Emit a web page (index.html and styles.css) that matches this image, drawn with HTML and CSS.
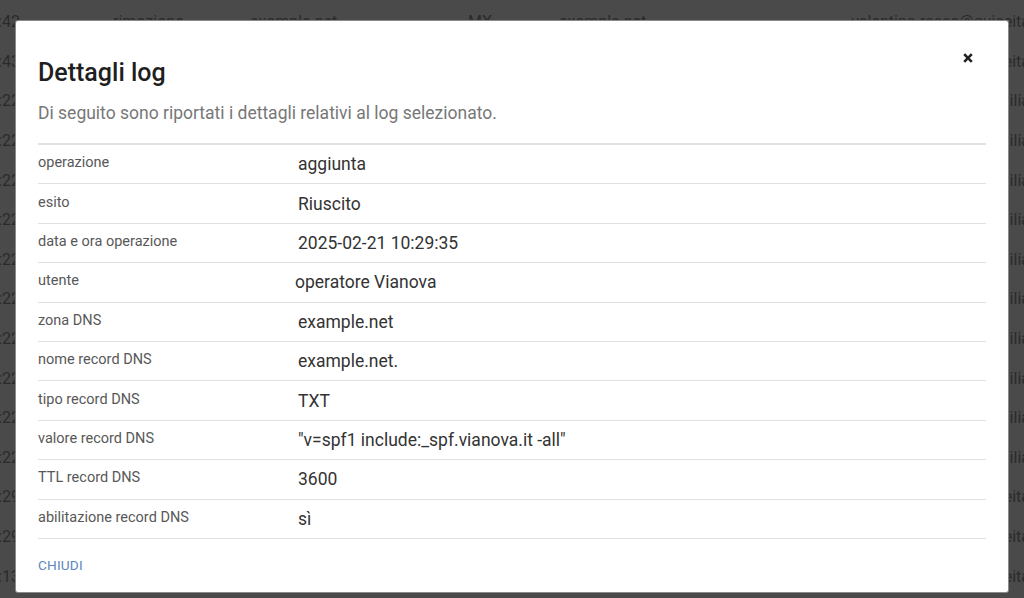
FILE: index.html
```html
<!DOCTYPE html>
<html lang="it">
<head>
<meta charset="utf-8">
<title>Dettagli log</title>
<link rel="stylesheet" href="styles.css">
</head>
<body>
<div class="bg">
  <div class="bg-row"><span class="c-time">2025-02-21 10:43:42</span><span>rimozione</span><span>example.net</span><span>MX</span><span>example.net</span><span class="c-user">valentina.rossa@quiseita</span></div>
  <div class="bg-row"><span class="c-time">2025-02-21 10:43</span><span>aggiunta</span><span>example.net</span><span>MX</span><span>example.net</span><span class="c-user">valentina.rossa@quiseita</span></div>
  <div class="bg-row"><span class="c-time">2025-02-21 10:22</span><span>aggiunta</span><span>example.net</span><span>TXT</span><span>example.net</span><span class="c-user">operatore@vianovafamilia</span></div>
  <div class="bg-row"><span class="c-time">2025-02-21 10:22</span><span>aggiunta</span><span>example.net</span><span>TXT</span><span>example.net</span><span class="c-user">operatore@vianovafamilia</span></div>
  <div class="bg-row"><span class="c-time">2025-02-21 10:22</span><span>aggiunta</span><span>example.net</span><span>TXT</span><span>example.net</span><span class="c-user">operatore@vianovafamilia</span></div>
  <div class="bg-row"><span class="c-time">2025-02-21 10:22</span><span>aggiunta</span><span>example.net</span><span>TXT</span><span>example.net</span><span class="c-user">operatore@vianovafamilia</span></div>
  <div class="bg-row"><span class="c-time">2025-02-21 10:22</span><span>aggiunta</span><span>example.net</span><span>TXT</span><span>example.net</span><span class="c-user">operatore@vianovafamilia</span></div>
  <div class="bg-row"><span class="c-time">2025-02-21 10:22</span><span>aggiunta</span><span>example.net</span><span>TXT</span><span>example.net</span><span class="c-user">operatore@vianovafamilia</span></div>
  <div class="bg-row"><span class="c-time">2025-02-21 10:22</span><span>aggiunta</span><span>example.net</span><span>TXT</span><span>example.net</span><span class="c-user">operatore@vianovafamilia</span></div>
  <div class="bg-row"><span class="c-time">2025-02-21 10:22</span><span>aggiunta</span><span>example.net</span><span>TXT</span><span>example.net</span><span class="c-user">operatore@vianovafamilia</span></div>
  <div class="bg-row"><span class="c-time">2025-02-21 10:22</span><span>aggiunta</span><span>example.net</span><span>TXT</span><span>example.net</span><span class="c-user">operatore@vianovafamilia</span></div>
  <div class="bg-row"><span class="c-time">2025-02-21 10:22</span><span>aggiunta</span><span>example.net</span><span>TXT</span><span>example.net</span><span class="c-user">operatore@vianovafamilia</span></div>
  <div class="bg-row"><span class="c-time">2025-02-21 10:29</span><span>aggiunta</span><span>example.net</span><span>TXT</span><span>example.net</span><span class="c-user">valentina.rossa@quiseita</span></div>
  <div class="bg-row"><span class="c-time">2025-02-21 10:29</span><span>aggiunta</span><span>example.net</span><span>TXT</span><span>example.net</span><span class="c-user">valentina.rossa@quiseita</span></div>
  <div class="bg-row"><span class="c-time">2025-02-21 10:13</span><span>aggiunta</span><span>example.net</span><span>TXT</span><span>example.net</span><span class="c-user">valentina.rossa@quiseita</span></div>
</div>

<div class="modal">
  <button class="close" aria-label="Chiudi">
    <svg width="10" height="10" viewBox="0 0 10 10"><path d="M1.2 1.2 L8.8 8.8 M8.8 1.2 L1.2 8.8" stroke="#222" stroke-width="2.6" stroke-linecap="butt" fill="none"/></svg>
  </button>
  <h4 class="title">Dettagli log</h4>
  <p class="subtitle">Di seguito sono riportati i dettagli relativi al log selezionato.</p>
  <div class="details">
    <div class="row"><span class="label">operazione</span><span class="value">aggiunta</span></div>
    <div class="row"><span class="label">esito</span><span class="value">Riuscito</span></div>
    <div class="row"><span class="label">data e ora operazione</span><span class="value">2025-02-21 10:29:35</span></div>
    <div class="row"><span class="label">utente</span><span class="value value-shift">operatore Vianova</span></div>
    <div class="row"><span class="label">zona DNS</span><span class="value">example.net</span></div>
    <div class="row"><span class="label">nome record DNS</span><span class="value">example.net.</span></div>
    <div class="row"><span class="label">tipo record DNS</span><span class="value">TXT</span></div>
    <div class="row"><span class="label">valore record DNS</span><span class="value">"v=spf1 include:_spf.vianova.it -all"</span></div>
    <div class="row"><span class="label">TTL record DNS</span><span class="value">3600</span></div>
    <div class="row"><span class="label">abilitazione record DNS</span><span class="value">sì</span></div>
  </div>
  <div class="footer"><a class="btn-close">CHIUDI</a></div>
</div>
</body>
</html>
```

FILE: styles.css
```css
html, body {
  margin: 0;
  padding: 0;
}
body {
  width: 1024px;
  height: 598px;
  overflow: hidden;
  background: #4a4a4a;
  font-family: Roboto, "Liberation Sans", sans-serif;
  position: relative;
}

/* background table under the overlay */
.bg {
  width: 1030px;
  padding-top: 2px;
  color: #2a2a2a;
  font-size: 16px;
}
.bg-row {
  display: grid;
  grid-template-columns: 113px 137px 218px 91px 260px 211px;
  height: 39.6px;
  align-items: center;
  white-space: nowrap;
}
.bg-row span {
  overflow: hidden;
}
.bg-row .c-time,
.bg-row .c-user {
  display: flex;
  justify-content: flex-end;
}
.bg-row .c-time {
  padding-right: 93px;
}

/* modal */
.modal {
  position: absolute;
  left: 16px;
  top: 21px;
  width: 992px;
  height: 571px;
  box-sizing: border-box;
  padding: 36px 22px 0;
  background: #fff;
  border-radius: 2px;
  box-shadow: 0 0 0 1px #8a8a8a;
}
.close {
  position: absolute;
  top: 32px;
  right: 35px;
  width: 10px;
  height: 10px;
  padding: 0;
  border: 0;
  background: none;
  display: flex;
}
.title {
  margin: 0;
  font-size: 25px;
  line-height: 32px;
  font-weight: 500;
  color: #1f1f1f;
}
.subtitle {
  margin: 12px 0 0;
  font-size: 17.5px;
  line-height: 24px;
  color: #777;
}
.details {
  margin-top: 18px;
  border-top: 2px solid #e2e2e2;
}
.row {
  display: grid;
  grid-template-columns: 260px 1fr;
  align-items: center;
  height: 39.4px;
  box-sizing: border-box;
  border-bottom: 1px solid #e0e0e0;
}
.label {
  font-size: 14.5px;
  color: #585858;
  padding-bottom: 3px;
}
.value {
  font-size: 17.5px;
  color: #333;
}
.value-shift {
  margin-left: -3px;
}
.footer {
  height: 53px;
  display: flex;
  align-items: center;
}
.btn-close {
  font-size: 13.6px;
  color: #5a87bf;
  letter-spacing: 0.2px;
}
```
